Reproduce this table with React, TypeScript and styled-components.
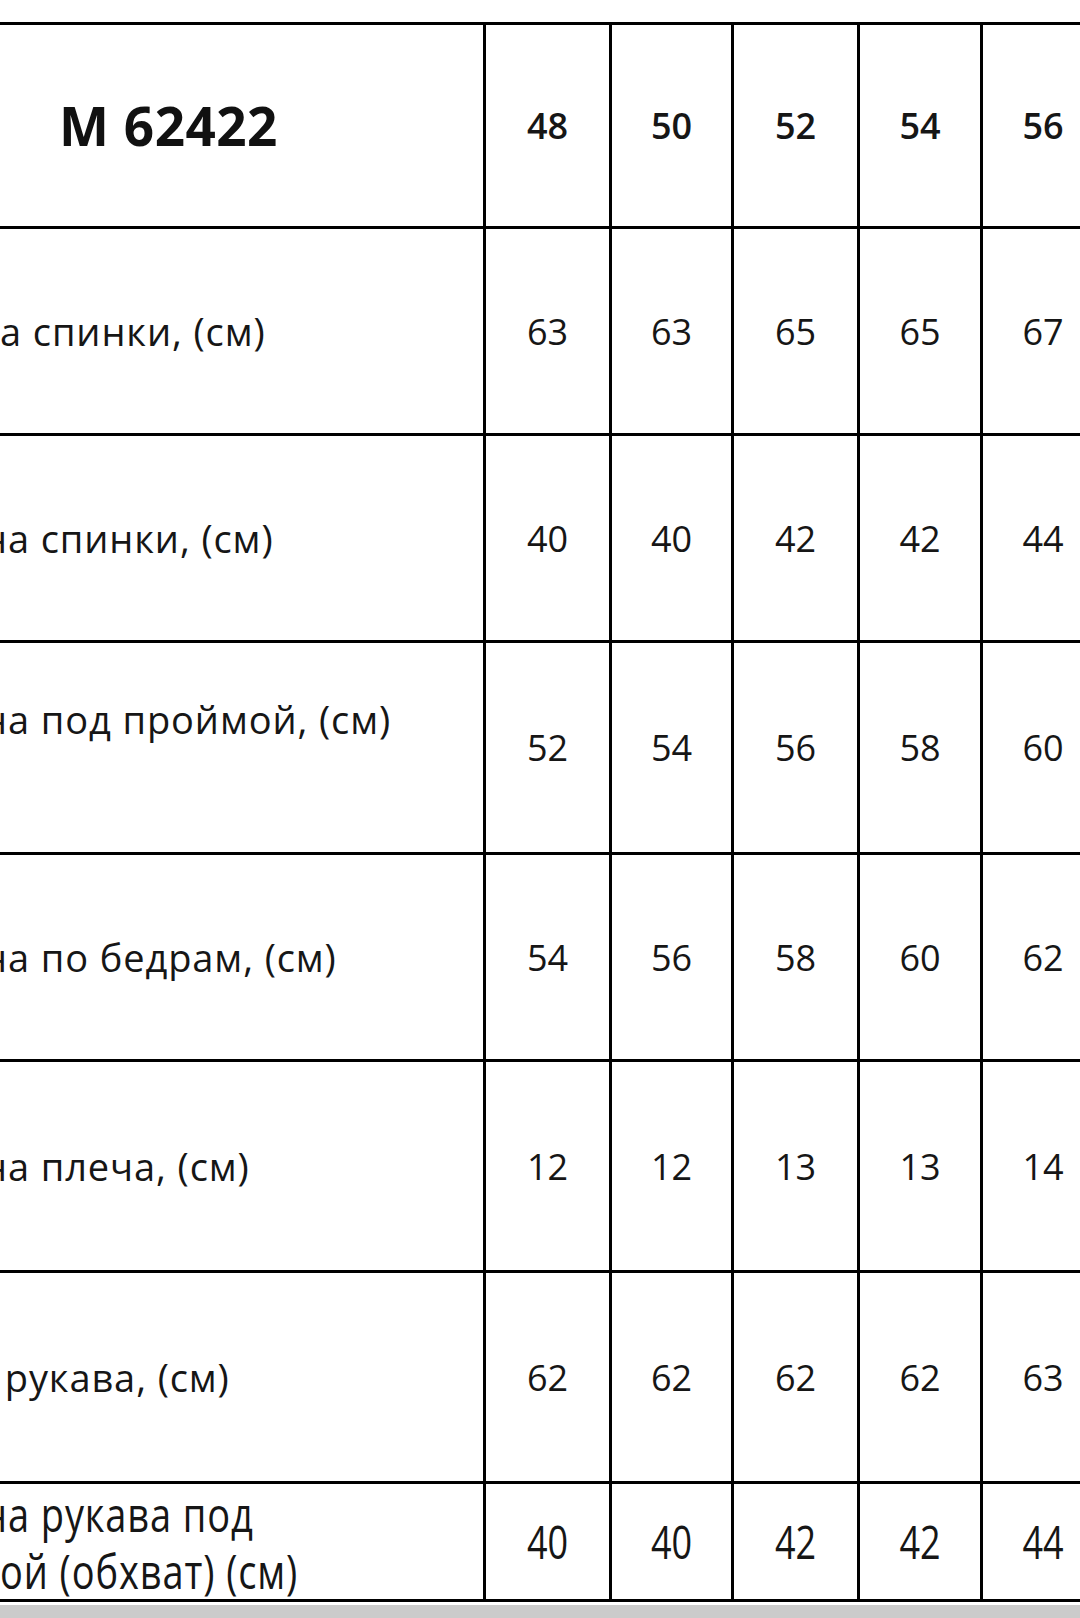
import React from 'react';
import styled, { createGlobalStyle } from 'styled-components';

const GlobalStyle = createGlobalStyle`
  html, body {
    margin: 0;
    padding: 0;
    background: #ffffff;
  }
  body {
    overflow: hidden;
    font-family: 'Open Sans', 'Noto Sans', sans-serif;
    color: #161616;
  }
`;

const Page = styled.div`
  width: 1080px;
  height: 1618px;
  overflow: hidden;
  display: flex;
  flex-direction: column;
  padding-top: 22px;
  box-sizing: border-box;
  background: #ffffff;
`;

const Table = styled.div`
  display: flex;
  flex-direction: column;
  border-top: 3px solid #000;
`;

const Row = styled.div<{ $h: number }>`
  display: grid;
  grid-template-columns: 486px 126px 122px 126px 123px 123px;
  height: ${(p) => p.$h}px;
  border-bottom: 3px solid #000;
  box-sizing: border-box;
`;

const Cell = styled.div`
  display: flex;
  align-items: center;
  justify-content: center;
  border-right: 3px solid #000;
  overflow: hidden;
  min-width: 0;
`;

const LabelCell = styled(Cell)<{ $lift?: number }>`
  justify-content: flex-start;
  padding-bottom: ${(p) => (p.$lift ?? 0) * 2}px;
`;

const TitleCell = styled(Cell)`
  padding-right: 146px;
`;

const Title = styled.span`
  font-size: 53px;
  font-weight: 700;
  color: #111;
  letter-spacing: 0.5px;
`;

const Label = styled.span<{ $cut?: number }>`
  font-size: 38px;
  line-height: 45px;
  white-space: pre;
  margin-left: ${(p) => -(p.$cut ?? 0)}px;
  letter-spacing: 0.9px;
`;

const Value = styled.span<{ $head?: boolean }>`
  font-size: 36px;
  font-weight: ${(p) => (p.$head ? 600 : 400)};
`;

const Stretch = styled.div`
  display: flex;
  flex-direction: column;
  transform: scaleY(1.27);
`;

const Footer = styled.div`
  margin-top: 3px;
  flex: 1;
  background: #cbcbcb;
`;

type Line = { text: string; cut?: number };

const rows: { h: number; lines: Line[]; lift?: number; values: number[] }[] = [
  { h: 207, lines: [{ text: 'а спинки, (см)' }], values: [63, 63, 65, 65, 67] },
  { h: 207, lines: [{ text: 'на спинки, (см)', cut: 17 }], values: [40, 40, 42, 42, 44] },
  { h: 212, lines: [{ text: 'на под проймой, (см)', cut: 17 }], lift: 28, values: [52, 54, 56, 58, 60] },
  { h: 207, lines: [{ text: 'на по бедрам, (см)', cut: 17 }], values: [54, 56, 58, 60, 62] },
  { h: 211, lines: [{ text: 'на плеча, (см)', cut: 17 }], values: [12, 12, 13, 13, 14] },
  { h: 211, lines: [{ text: ' рукава, (см)', cut: 6 }], values: [62, 62, 62, 62, 63] },
];

const sizes = [48, 50, 52, 54, 56];

export default function App() {
  return (
    <>
      <GlobalStyle />
      <Page>
        <Table>
          <Row $h={204}>
            <TitleCell>
              <Title>М 62422</Title>
            </TitleCell>
            {sizes.map((s) => (
              <Cell key={s}>
                <Value $head>{s}</Value>
              </Cell>
            ))}
          </Row>
          {rows.map((r, i) => (
            <Row $h={r.h} key={i}>
              <LabelCell $lift={r.lift}>
                {r.lines.map((l, j) => (
                  <Label key={j} $cut={l.cut}>
                    {l.text}
                  </Label>
                ))}
              </LabelCell>
              {r.values.map((v, j) => (
                <Cell key={j}>
                  <Value>{v}</Value>
                </Cell>
              ))}
            </Row>
          ))}
          <Row $h={118}>
            <LabelCell>
              <Stretch>
                <Label $cut={17}>на рукава под</Label>
                <Label>ой (обхват) (см)</Label>
              </Stretch>
            </LabelCell>
            {[40, 40, 42, 42, 44].map((v, j) => (
              <Cell key={j}>
                <Stretch>
                  <Value>{v}</Value>
                </Stretch>
              </Cell>
            ))}
          </Row>
        </Table>
        <Footer />
      </Page>
    </>
  );
}
